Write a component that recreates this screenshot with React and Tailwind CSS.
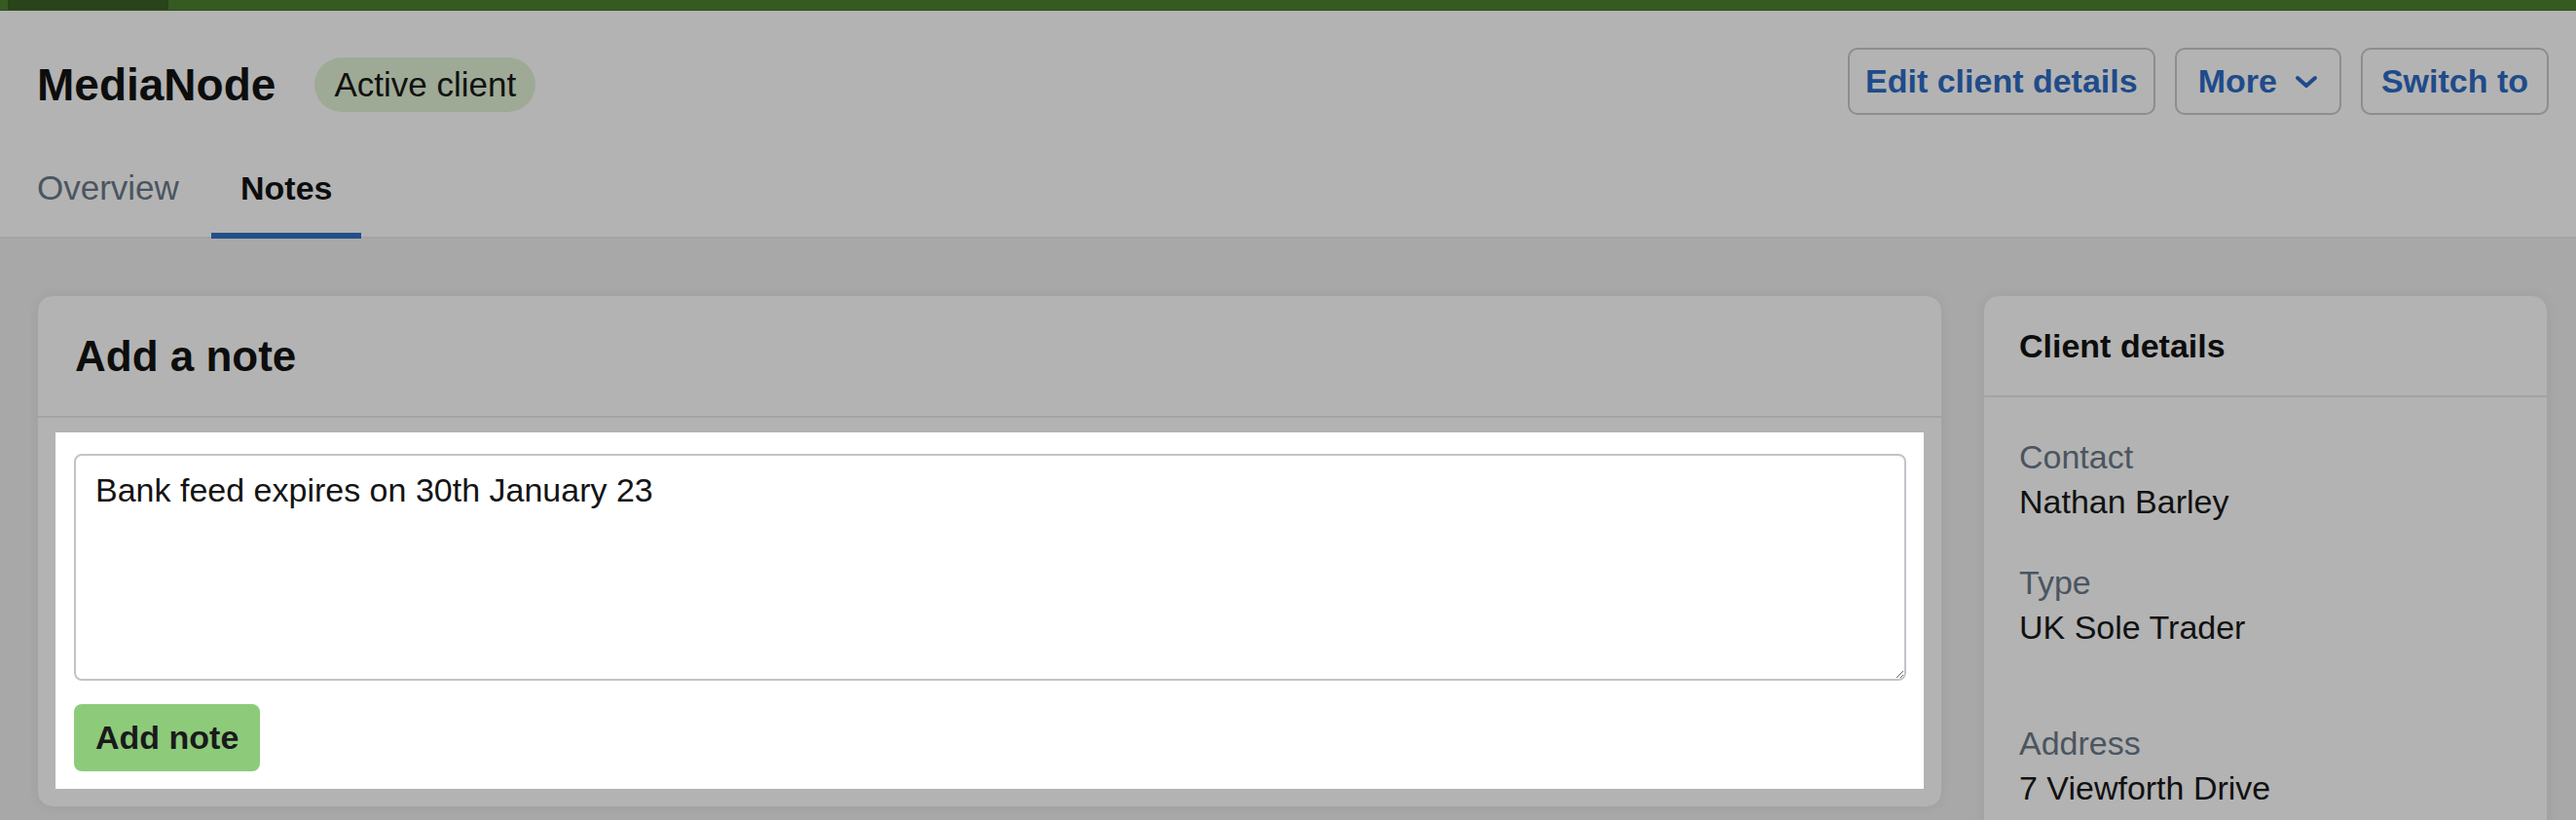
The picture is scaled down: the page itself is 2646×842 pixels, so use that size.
export default function App() {
  return (
    <div className="min-h-screen bg-[#a8a8a8] font-['Liberation_Sans',Arial,sans-serif] text-[#101010]">
      {/* top bar */}
      <div className="flex h-[11px] bg-[#375a22] border-b border-[#2f4c1d]">
        <div className="ml-[8px] w-[165px] bg-[#29431a]" />
      </div>

      {/* page header */}
      <div className="bg-[#b3b3b3] border-b-2 border-[#a3a3aa] pl-[38px] pr-[28px] pt-[38px]">
        <div className="flex items-center justify-between h-[69px]">
          <div className="flex items-center gap-[40px] mt-[6px]">
            <h1 className="text-[46px] leading-[56px] font-bold text-[#0d0d0d]">MediaNode</h1>
            <span className="h-[56px] px-[20px] rounded-full bg-[#9eaa96] text-[35px] leading-[56px] text-[#111]">
              Active client
            </span>
          </div>
          <div className="flex items-center gap-[20px]">
            <button className="h-[69px] px-[16px] rounded-[10px] border-2 border-[#8b8d8f] text-[34px] font-bold text-[#1f4b8a]">
              Edit client details
            </button>
            <button className="h-[69px] pl-[22px] pr-[22px] rounded-[10px] border-2 border-[#8b8d8f] text-[34px] font-bold text-[#1f4b8a] flex items-center gap-[18px]">
              More
              <svg width="24" height="14" viewBox="0 0 24 14" fill="none">
                <polyline points="3,3 12,11 21,3" stroke="#1f4b8a" strokeWidth="4" strokeLinecap="round" strokeLinejoin="round" />
              </svg>
            </button>
            <button className="h-[69px] px-[19px] rounded-[10px] border-2 border-[#8b8d8f] text-[34px] font-bold text-[#1f4b8a]">
              Switch to
            </button>
          </div>
        </div>

        <div className="flex mt-[55px] -mb-[2px]">
          <div className="w-[179px] text-[35px] leading-[40px] pb-[26px] border-b-[6px] border-transparent text-[#4b5560]">
            Overview
          </div>
          <div className="px-[30px] text-[34px] leading-[40px] pb-[26px] border-b-[6px] border-[#234f8a] font-bold text-[#0d0d0d]">
            Notes
          </div>
        </div>
      </div>

      {/* content */}
      <div className="flex items-start gap-[42px] pl-[38px] pr-[29px] pt-[58px]">
        <div className="flex-1 rounded-[16px] bg-[#b3b3b3] border border-[#a4a4a4] shadow-[0_0_12px_rgba(0,0,0,0.06)]">
          <div className="px-[38px] pt-[36px] pb-[35px] border-b-2 border-[#a3a3a8]">
            <h2 className="text-[44px] leading-[52px] font-bold text-[#0d0d0d]">Add a note</h2>
          </div>
          <div className="px-[18px] pt-[15px] pb-[18px]">
            <div className="bg-white pl-[19px] pr-[18px] pt-[22px] pb-[18px]">
              <textarea
                className="block w-full h-[233px] rounded-[8px] border-2 border-[#c0c4c9] bg-white px-[20px] pt-[12px] text-[34px] leading-[46px] text-[#141414] outline-none"
                defaultValue="Bank feed expires on 30th January 23"
              />
              <button className="mt-[24px] h-[69px] px-[22px] rounded-[8px] bg-[#8dcb7b] text-[34px] font-bold text-[#1a1a1a]">
                Add note
              </button>
            </div>
          </div>
        </div>

        <div className="w-[580px] h-[700px] rounded-[16px] bg-[#b3b3b3] border border-[#a4a4a4] shadow-[0_0_12px_rgba(0,0,0,0.06)]">
          <div className="px-[36px] pt-[31px] pb-[31px] border-b-2 border-[#a3a3a8]">
            <h3 className="text-[34px] leading-[40px] font-bold text-[#0d0d0d]">Client details</h3>
          </div>
          <div className="px-[36px] pt-[38px] text-[34px] leading-[46px]">
            <div className="text-[#4b5560]">Contact</div>
            <div className="text-[#111]">Nathan Barley</div>
            <div className="mt-[37px] text-[#4b5560]">Type</div>
            <div className="text-[#111]">UK Sole Trader</div>
            <div className="mt-[73px] text-[#4b5560]">Address</div>
            <div className="text-[#111]">7 Viewforth Drive</div>
          </div>
        </div>
      </div>
    </div>
  );
}
